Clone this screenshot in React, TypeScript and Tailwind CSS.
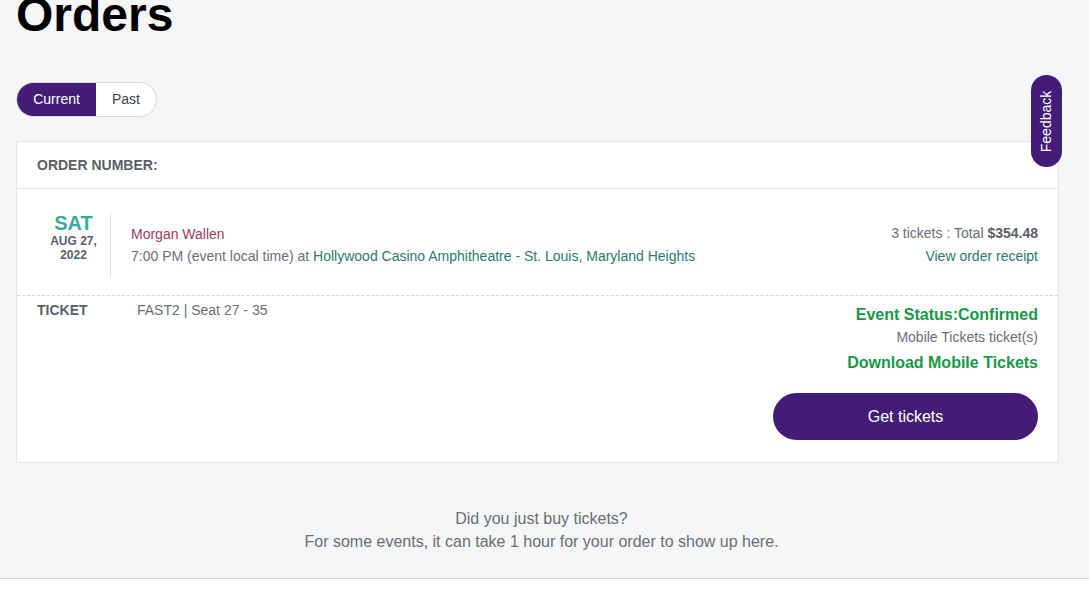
import React from "react";

export default function App() {
  return (
    <div
      className="relative min-h-[601px] w-full overflow-hidden bg-[#f5f6f8] text-[#6a6e75]"
      style={{ fontFamily: '"Liberation Sans", Arial, sans-serif' }}
    >
      <div className="pl-4 pr-[30px]">
        <h1 className="-mt-[9px] text-[48px] font-bold leading-none text-black">Orders</h1>

        <div className="mt-[43px] flex h-[35px] w-[141px] overflow-hidden rounded-full border border-[#d6d8dc] bg-white text-[14px]">
          <div className="flex w-[79px] items-center justify-center bg-[#431c77] text-white">Current</div>
          <div className="flex flex-1 items-center justify-center text-[#3d4148]">Past</div>
        </div>

        <div className="mt-[24px] border border-[#e3e5e8] bg-white">
          <div className="flex h-[47px] items-center border-b border-[#e6e8eb] pl-5 text-[14px] font-bold text-[#5b5f66]">
            ORDER NUMBER:
          </div>

          <div className="flex items-center pt-[24px] pb-[18px] pl-5 pr-5">
            <div className="flex h-[64px] w-[74px] flex-col items-center border-r border-[#dcdfe3]">
              <div className="text-[20px] font-bold leading-[20px] text-[#36aaa0]">SAT</div>
              <div className="mt-[1px] text-center text-[12px] font-bold leading-[14px] text-[#5b5f66]">
                AUG 27,
                <br />
                2022
              </div>
            </div>
            <div className="flex-1 pl-5 text-[14px] leading-[22px]">
              <div className="text-[#a23b62]">Morgan Wallen</div>
              <div className="text-[#6a6e75]">
                7:00 PM (event local time) at{" "}
                <span className="text-[#2b7a6e]">Hollywood Casino Amphitheatre - St. Louis, Maryland Heights</span>
              </div>
            </div>
            <div className="text-right text-[14px] leading-[23px]">
              <div className="text-[#6a6e75]">
                3 tickets : Total <span className="font-bold text-[#5b5f66]">$354.48</span>
              </div>
              <div className="text-[#2b7a6e]">View order receipt</div>
            </div>
          </div>

          <div className="flex border-t border-dashed border-[#d3d6da] pl-5 pr-5 pb-[22px]">
            <div className="flex flex-1 pt-[4px] text-[14px] leading-[20px]">
              <div className="w-[100px] font-bold text-[#5b5f66]">TICKET</div>
              <div className="text-[#6a6e75]">FAST2 | Seat 27 - 35</div>
            </div>
            <div className="flex flex-col items-end pt-[9px]">
              <div className="text-[16px] font-bold leading-[20px] text-[#169947]">Event Status:Confirmed</div>
              <div className="mt-[2px] text-[14px] leading-[20px] text-[#6a6e75]">Mobile Tickets ticket(s)</div>
              <div className="mt-[6px] text-[16px] font-bold leading-[20px] text-[#169947]">Download Mobile Tickets</div>
              <div className="mt-[20px] flex h-[47px] w-[265px] items-center justify-center rounded-full bg-[#431c77] text-[16px] text-white">
                Get tickets
              </div>
            </div>
          </div>
        </div>

        <div className="mt-[44px] pl-2 text-center text-[16px] leading-[23px] text-[#6a6e75]">
          <div>Did you just buy tickets?</div>
          <div>For some events, it can take 1 hour for your order to show up here.</div>
        </div>
      </div>

      <div className="mt-[25px] h-[40px] border-t border-[#d4d6d9] bg-white"></div>

      <div className="absolute left-[1031px] top-[75px] flex h-[92px] w-[31px] items-center justify-center rounded-full bg-[#431c77]">
        <span className="-rotate-90 whitespace-nowrap text-[14px] text-white">Feedback</span>
      </div>
    </div>
  );
}
